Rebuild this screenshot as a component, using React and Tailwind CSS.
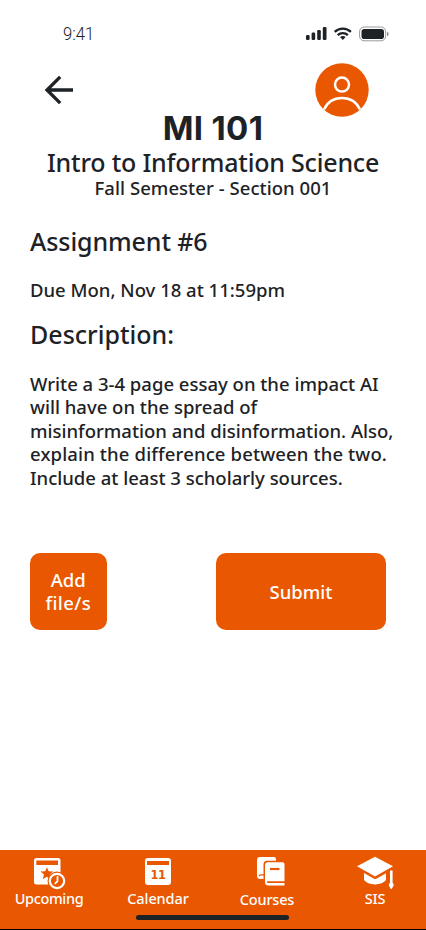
import React from "react";

function StatusIcons() {
  return (
    <svg width="84" height="20" viewBox="0 0 84 20" className="text-[#1d2226]">
      <g fill="currentColor">
        <rect x="1" y="11" width="3.6" height="5" rx="1.2" />
        <rect x="6.6" y="8.5" width="3.6" height="7.5" rx="1.2" />
        <rect x="12.2" y="6" width="3.6" height="10" rx="1.2" />
        <rect x="17.8" y="3" width="3.7" height="13" rx="1.2" />
        <path d="M35 13.1a3.9 3.9 0 0 1 5.6 0l-2.8 2.9z" />
        <rect x="56.5" y="5" width="22.5" height="10" rx="2.8" />
        <path d="M82 7.8v4.4c1.3-.6 1.7-1.4 1.7-2.2s-.4-1.6-1.7-2.2z" opacity=".5" />
      </g>
      <path d="M29.7 7.9a11.7 11.7 0 0 1 16.2 0M32.7 11.2a7.5 7.5 0 0 1 10.2 0" fill="none" stroke="currentColor" strokeWidth="2.3" />
      <rect x="54.6" y="3" width="26" height="13.8" rx="4.5" fill="none" stroke="currentColor" opacity=".45" />
    </svg>
  );
}

function BackArrow() {
  return (
    <svg width="30" height="30" viewBox="0 0 30 30" fill="none" stroke="#1d2226" strokeWidth="3.3">
      <path d="M29 15H4M16.2 1.8L3 15l13.2 13.2" />
    </svg>
  );
}

function Avatar() {
  return (
    <svg width="54" height="54" viewBox="0 0 54 54">
      <circle cx="27" cy="27" r="26.7" fill="#e95800" />
      <g fill="none" stroke="#fff" strokeWidth="2.5">
        <circle cx="27" cy="21.6" r="7" />
        <path d="M9 46.5C12.5 39 19 35 27 35S41.500 39 45 46.500" />
      </g>
    </svg>
  );
}

function UpcomingIcon() {
  return (
    <svg width="34" height="34" viewBox="0 0 34 34">
      <rect x="1" y="1" width="26.5" height="26.5" rx="2.5" fill="#fff" />
      <path d="M3.3 3.5h21.7v4.5H3.3z" fill="#e95800" />
      <path d="M14 10.2l1.6 4.1 4.6.2-3.500 3 1 4.600-3.900-2.300-4.100 2.500 1.300-4.800L7.500 14.500l4.700-.2z" fill="#e95800" />
      <circle cx="24" cy="24" r="9.5" fill="#e95800" />
      <circle cx="24" cy="24" r="7.2" fill="none" stroke="#fff" strokeWidth="2.2" />
      <path d="M24.5 19.2v5L21.8 27" fill="none" stroke="#fff" strokeWidth="1.8" />
    </svg>
  );
}

function CalendarIcon() {
  return (
    <div className="flex h-[26.5px] w-[26.5px] flex-col items-center rounded-[3px] bg-white pt-[2.5px] text-[#e95800]">
      <div className="h-[4.5px] w-[22px] bg-[#e95800]" />
      <span className="pt-px font-['DejaVu_Sans',sans-serif] text-[11.5px] leading-[18px] font-bold tracking-[-0.6px]">11</span>
    </div>
  );
}

function CoursesIcon() {
  return (
    <svg width="30" height="32" viewBox="0 0 30 32">
      <path d="M4 1h14a2 2 0 0 1 2 2v20H4.500A3.500 3.500 0 0 1 1 19.500V4a3 3 0 0 1 3-3z" fill="#fff" />
      <path d="M3.400 20.200c0-.9.500-1.300 1.400-1.300H9" fill="none" stroke="#e95800" strokeWidth="1.300" />
      <path d="M11 4.800H30V32H10.500A3 3 0 0 1 7.500 29V8.300a3.500 3.500 0 0 1 3.500-3.500z" fill="#e95800" />
      <path d="M12 6.300h14.500a2 2 0 0 1 2 2V25.200H12c-1.600 0-1.600 1.900 0 1.900h16.500v2.300H12.500A3.500 3.500 0 0 1 9 25.900V9.300a3 3 0 0 1 3-3z" fill="#fff" />
      <path d="M14 11.900h9.500v2.200H14z" fill="#e95800" />
    </svg>
  );
}

function CapIcon() {
  return (
    <svg width="38" height="34" viewBox="0 0 38 34" fill="#fff">
      <path d="M1 10.300L19 .8l18 9.500-18 10.200z" />
      <path d="M8 17l10.500 6c.6.200 1 .1 1.400-.1L30 17.300V24c-2 2.500-6 4.400-11 4.400S10 26.500 8 24z" />
      <path d="M34 14.500h2.600v12l1.300 2.500-2.200 4h-1l-2-4 1.300-2.500z" />
    </svg>
  );
}

const tabs = [
  { label: "Upcoming", Icon: UpcomingIcon, box: "w-[98px] pt-[7px]", slot: "h-[29px] pl-px", text: "tracking-[-0.35px]" },
  { label: "Calendar", Icon: CalendarIcon, box: "w-[120px] pt-[8px]", slot: "h-[28px]", text: "tracking-[-0.1px]" },
  { label: "Courses", Icon: CoursesIcon, box: "w-[98px] pt-[6px]", slot: "h-[31px] pl-[8px]", text: "tracking-[-0.2px]" },
  { label: "SIS", Icon: CapIcon, box: "w-[118px] pt-[6px]", slot: "h-[30px]", text: "tracking-[-0.2px]" },
];

export default function App() {
  return (
    <main className="flex h-[930px] w-[426px] flex-col overflow-hidden bg-white font-['Noto_Sans',sans-serif] font-medium text-[#1d2226]">
      <div className="flex h-[58px] items-start justify-between pt-6 pr-[37px] pl-[62.5px]">
        <span className="origin-left scale-x-[0.9] font-['Roboto',sans-serif] text-[18.5px] leading-[20px] font-light">9:41</span>
        <StatusIcons />
      </div>
      <header className="flex flex-col items-center text-center">
        <div className="flex h-[53px] w-full justify-between pt-[5px] pr-[57px] pl-[44px]">
          <span className="pt-[12px]"><BackArrow /></span>
          <Avatar />
        </div>
        <h1 className="font-['Inter',sans-serif] text-[33px] leading-[34px] font-bold tracking-[0.3px]">MI 101</h1>
        <h2 className="mt-[2px] text-[25px] leading-[30px] tracking-[-0.2px] whitespace-nowrap">Intro to Information Science</h2>
        <p className="text-[18.5px] leading-[22px] tracking-[0.05px] whitespace-nowrap">Fall Semester - Section 001</p>
      </header>
      <section className="mt-[27px] flex flex-col px-[30px] whitespace-nowrap">
        <h3 className="text-[25px] leading-[30px] tracking-[-0.1px]">Assignment #6</h3>
        <p className="mt-[23px] text-[18.5px] leading-[22px]">Due Mon, Nov 18 at 11:59pm</p>
        <h3 className="mt-[18px] text-[25px] leading-[30px]">Description:</h3>
        <p className="mt-[23px] flex flex-col text-[18.5px] leading-[23.4px]">
          <span>Write a 3-4 page essay on the impact AI </span>
          <span>will have on the spread of </span>
          <span>misinformation and disinformation. Also, </span>
          <span className="tracking-[0.14px]">explain the difference between the two. </span>
          <span>Include at least 3 scholarly sources.</span>
        </p>
      </section>
      <div className="mt-[64px] flex justify-between pr-[40px] pl-[30px] text-[18.5px] leading-[23.4px] text-white">
        <button className="h-[76.5px] w-[76.5px] rounded-[10px] bg-[#e95800]">Add<br /><span className="tracking-[0.4px]">file/s</span></button>
        <button className="h-[76.5px] w-[170px] rounded-[10px] bg-[#e95800]">Submit</button>
      </div>
      <nav className="relative mt-auto flex h-[80px] border-b border-black bg-[#e95800] text-white">
        {tabs.map(({ label, Icon, box, slot, text }) => (
          <div key={label} className={`flex shrink-0 flex-col items-center ${box}`}>
            <span className={`shrink-0 ${slot}`}><Icon /></span>
            <span className={`mt-[2px] text-[14.5px] leading-[20px] ${text}`}>{label}</span>
          </div>
        ))}
        <div className="absolute top-[65px] left-[136px] h-[5px] w-[153px] rounded-full bg-[#1d2226]" />
      </nav>
    </main>
  );
}
